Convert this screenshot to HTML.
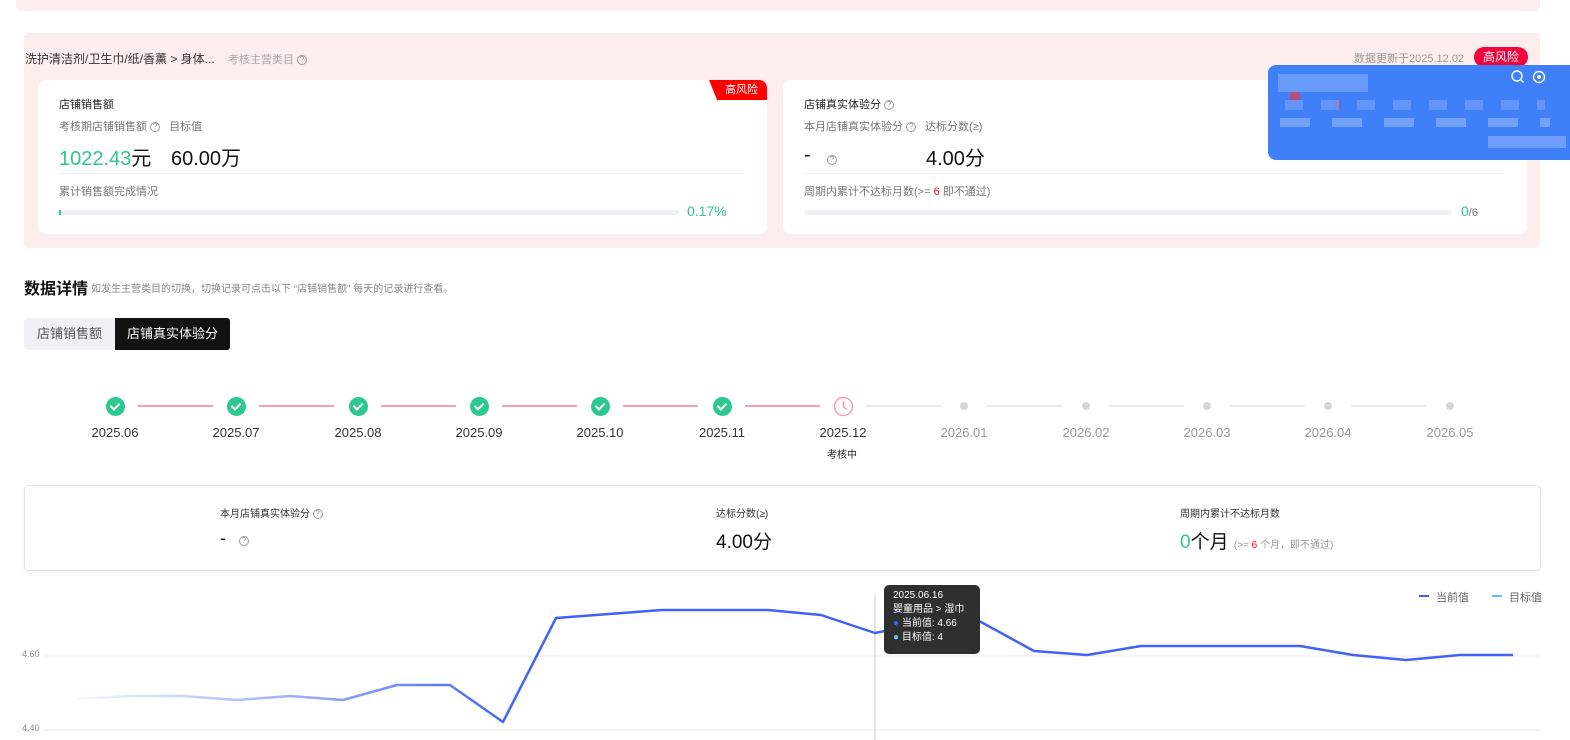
<!DOCTYPE html>
<html><head><meta charset="utf-8"><style>
*{margin:0;padding:0;box-sizing:border-box}
body{width:1570px;height:740px;overflow:hidden;background:#fff;font-family:"Liberation Sans","Noto Sans CJK SC",sans-serif;color:#222;position:relative}
.a{position:absolute;white-space:nowrap}
.q{display:inline-block;width:10px;height:10px;border:1px solid #999;border-radius:50%;font-size:8px;line-height:8px;text-align:center;color:#999;vertical-align:1px}
.g{color:#888}
.card{position:absolute;background:#fff;border-radius:8px}
.bar{position:absolute;height:5px;background:#eff0f3;border-radius:3px}
.node{position:absolute;width:19px;height:19px;border-radius:50%;background:#2dc88d;top:397px}
.node:after{content:"";position:absolute;left:6px;top:4px;width:4px;height:7px;border:solid #fff;border-width:0 2px 2px 0;transform:rotate(45deg)}
.ln{position:absolute;top:405px;height:2px}
.dot{position:absolute;width:8px;height:8px;border-radius:50%;background:#d5d6da;top:402px}
.tl{position:absolute;top:425px;font-size:13px;color:#333;width:80px;text-align:center}
</style></head><body>
<div class="a" style="left:16px;top:0;width:1524px;height:11px;background:#fdeeed;border-radius:0 0 6px 6px"></div>
<div class="a" style="left:24px;top:33px;width:1516px;height:215px;background:#fdeeed;border-radius:4px"></div>
<div class="a" style="left:25px;top:50px;font-size:12px;color:#333">洗护清洁剂/卫生巾/纸/香薰 &gt; 身体... <span class="g" style="margin-left:10px;font-size:11px;color:#aaa">考核主营类目 <span class="q">?</span></span></div>
<div class="a" style="left:1354px;top:50px;font-size:11px;color:#999">数据更新于2025.12.02</div>
<div class="a" style="left:1474px;top:47px;width:54px;height:20px;background:#f5003a;border-radius:10px;color:#fff;font-size:12px;text-align:center;line-height:20px">高风险</div>

<div class="card" style="left:38px;top:80px;width:729px;height:154px">
 <div class="a" style="right:0;top:0;width:58px;height:20px;background:#ff0000;border-radius:0 8px 0 0;clip-path:polygon(0 0,100% 0,100% 100%,14% 100%);color:#fff;font-size:11px;line-height:20px;text-align:right;padding-right:9px">高风险</div>
 <div class="a" style="left:21px;top:16px;font-size:11px;color:#222">店铺销售额</div>
 <div class="a" style="left:21px;top:38px;font-size:11px;color:#777">考核期店铺销售额 <span class="q">?</span><span style="margin-left:9px">目标值</span></div>
 <div class="a" style="left:21px;top:62px;font-size:20px;color:#2dc88d">1022.43<span style="color:#111">元</span></div>
 <div class="a" style="left:133px;top:62px;font-size:20px;color:#111">60.00万</div>
 <div class="a" style="left:21px;top:93px;width:685px;height:1px;background:#f0f0f0"></div>
 <div class="a" style="left:21px;top:103px;font-size:11px;color:#777">累计销售额完成情况</div>
 <div class="bar" style="left:21px;top:130px;width:620px"></div>
 <div class="a" style="left:21px;top:130px;width:2px;height:5px;background:#2dc88d"></div>
 <div class="a" style="left:649px;top:123px;font-size:14px;color:#2dc88d">0.17%</div>
</div>

<div class="card" style="left:783px;top:80px;width:744px;height:154px">
 <div class="a" style="left:21px;top:16px;font-size:11px;color:#222">店铺真实体验分 <span class="q">?</span></div>
 <div class="a" style="left:21px;top:38px;font-size:11px;color:#777">本月店铺真实体验分 <span class="q">?</span><span style="margin-left:9px">达标分数(≥)</span></div>
 <div class="a" style="left:21px;top:64px;font-size:20px;color:#111">-</div>
 <div class="a" style="left:44px;top:70px"><span class="q">?</span></div>
 <div class="a" style="left:143px;top:62px;font-size:20px;color:#111">4.00分</div>
 <div class="a" style="left:21px;top:93px;width:700px;height:1px;background:#f0f0f0"></div>
 <div class="a" style="left:21px;top:103px;font-size:11px;color:#777">周期内累计不达标月数(&gt;= <span style="color:#f00">6</span> 即不通过)</div>
 <div class="bar" style="left:21px;top:130px;width:648px"></div>
 <div class="a" style="left:678px;top:123px;font-size:14px;color:#2dc88d">0<span style="font-size:11px;color:#777">/6</span></div>
</div>

<div class="a" style="left:1268px;top:65px;width:302px;height:95px;background:#3f7ff8;border-radius:8px 0 0 8px"></div>
<div class="a" style="left:1278px;top:74px;width:90px;height:18px;background:#7aa5fb;opacity:.7"></div>
<div class="a" style="left:1290px;top:92px;width:10px;height:10px;background:#b4507a"></div>
<div class="a" style="left:1334px;top:100px;width:8px;height:10px;background:#b4507a"></div>
<div class="a" style="left:1285px;top:100px;width:260px;height:10px;background:repeating-linear-gradient(90deg,#6c9bfa 0 18px,#3f7ff8 18px 36px);opacity:.8"></div>
<div class="a" style="left:1280px;top:118px;width:270px;height:9px;background:repeating-linear-gradient(90deg,#80aafb 0 30px,#3f7ff8 30px 52px);opacity:.8"></div>
<div class="a" style="left:1488px;top:136px;width:78px;height:12px;background:#7aa5fb;opacity:.8"></div>
<svg class="a" style="left:1510px;top:69px" width="40" height="16"><circle cx="7" cy="7" r="5" fill="none" stroke="#fff" stroke-width="1.4"/><path d="M10.5 10.5l3 3" stroke="#fff" stroke-width="1.4"/><circle cx="29" cy="8" r="5.5" fill="none" stroke="#fff" stroke-width="1.4"/><circle cx="29" cy="8" r="2" fill="#fff"/></svg>

<div class="a" style="left:24px;top:275px;font-size:16px;font-weight:bold;color:#111">数据详情</div>
<div class="a" style="left:91px;top:280px;font-size:10px;color:#888">如发生主营类目的切换，切换记录可点击以下 “店铺销售额” 每天的记录进行查看。</div>
<div class="a" style="left:24px;top:318px;width:91px;height:32px;background:#eff1f5;border-radius:3px 0 0 3px;font-size:13px;color:#555;line-height:32px;text-align:center">店铺销售额</div>
<div class="a" style="left:115px;top:318px;width:115px;height:32px;background:#121212;border-radius:0 3px 3px 0;font-size:13px;color:#fff;line-height:32px;text-align:center">店铺真实体验分</div>

<div class="ln" style="left:138px;width:75px;background:#f6a1ab"></div>
<div class="ln" style="left:259px;width:75px;background:#f6a1ab"></div>
<div class="ln" style="left:381px;width:75px;background:#f6a1ab"></div>
<div class="ln" style="left:502px;width:75px;background:#f6a1ab"></div>
<div class="ln" style="left:623px;width:75px;background:#f6a1ab"></div>
<div class="ln" style="left:745px;width:75px;background:#f6a1ab"></div>
<div class="ln" style="left:866px;width:75px;background:#e8e8e8"></div>
<div class="ln" style="left:987px;width:75px;background:#e8e8e8"></div>
<div class="ln" style="left:1109px;width:75px;background:#e8e8e8"></div>
<div class="ln" style="left:1230px;width:75px;background:#e8e8e8"></div>
<div class="ln" style="left:1351px;width:75px;background:#e8e8e8"></div>
<div class="node" style="left:106px"></div><div class="node" style="left:227px"></div><div class="node" style="left:349px"></div>
<div class="node" style="left:470px"></div><div class="node" style="left:591px"></div><div class="node" style="left:713px"></div>
<svg class="a" style="left:833px;top:396px" width="21" height="21" viewBox="0 0 21 21"><circle cx="10.5" cy="10.5" r="9" fill="none" stroke="#f6a1ab" stroke-width="1.5"/><path d="M10.5 5v6l3.5 2.5" fill="none" stroke="#f6a1ab" stroke-width="1.5"/></svg>
<div class="dot" style="left:960px"></div><div class="dot" style="left:1082px"></div><div class="dot" style="left:1203px"></div><div class="dot" style="left:1324px"></div><div class="dot" style="left:1446px"></div>
<div class="tl" style="left:75px">2025.06</div><div class="tl" style="left:196px">2025.07</div><div class="tl" style="left:318px">2025.08</div>
<div class="tl" style="left:439px">2025.09</div><div class="tl" style="left:560px">2025.10</div><div class="tl" style="left:682px">2025.11</div>
<div class="tl" style="left:803px">2025.12</div>
<div class="tl" style="left:924px;color:#999">2026.01</div><div class="tl" style="left:1046px;color:#999">2026.02</div><div class="tl" style="left:1167px;color:#999">2026.03</div><div class="tl" style="left:1288px;color:#999">2026.04</div><div class="tl" style="left:1410px;color:#999">2026.05</div>
<div class="a" style="left:827px;top:446px;font-size:10px;color:#222">考核中</div>

<div class="a" style="left:24px;top:485px;width:1517px;height:86px;border:1px solid #e3e3e6;border-radius:5px;box-shadow:0 3px 6px rgba(0,0,0,.04)"></div>
<div class="a" style="left:220px;top:505px;font-size:10px;color:#333">本月店铺真实体验分 <span class="q">?</span></div>
<div class="a" style="left:220px;top:528px;font-size:18px;color:#111">- <span class="q" style="margin-left:8px">?</span></div>
<div class="a" style="left:716px;top:505px;font-size:10px;color:#333">达标分数(≥)</div>
<div class="a" style="left:716px;top:527px;font-size:19px;color:#111">4.00分</div>
<div class="a" style="left:1180px;top:505px;font-size:10px;color:#333">周期内累计不达标月数</div>
<div class="a" style="left:1180px;top:527px;font-size:19px;color:#111"><span style="color:#2dc88d">0</span>个月 <span style="font-size:10px;color:#999">(&gt;= <span style="color:#f00">6</span> 个月，即不通过)</span></div>

<div class="a" style="left:1419px;top:595px;width:10px;height:2px;background:#4060f5"></div>
<div class="a" style="left:1436px;top:589px;font-size:11px;color:#666">当前值</div>
<div class="a" style="left:1492px;top:595px;width:10px;height:2px;background:#5ec3f0"></div>
<div class="a" style="left:1509px;top:589px;font-size:11px;color:#666">目标值</div>
<div class="a" style="left:22px;top:649px;font-size:9px;color:#888">4.60</div>
<div class="a" style="left:22px;top:723px;font-size:9px;color:#888">4.40</div>
<svg class="a" style="left:0;top:0" width="1570" height="740">
<defs><linearGradient id="lg" x1="77" x2="520" gradientUnits="userSpaceOnUse"><stop offset="0" stop-color="#4262f7" stop-opacity="0.05"/><stop offset="1" stop-color="#4262f7"/></linearGradient></defs>
<line x1="44" y1="656" x2="1540" y2="656" stroke="#e8e8ea"/>
<line x1="44" y1="730" x2="1540" y2="730" stroke="#e8e8ea"/>
<line x1="875" y1="595" x2="875" y2="740" stroke="#ccc"/>
<polyline fill="none" stroke="url(#lg)" stroke-width="2.5" stroke-linejoin="round" points="77,699 130,696 183,696 237,700 290,696 343,700 397,685 450,685 503,722 556,618 609,614 662,610 715,610 768,610 821,615 875,633 928,622 981,622 1034,651 1087,655 1141,646 1194,646 1247,646 1300,646 1353,655 1406,660 1460,655 1513,655"/>
</svg>
<div class="a" style="left:884px;top:585px;width:96px;height:69px;background:#2f2f2f;border-radius:5px;color:#fff;font-size:10px;line-height:14px;padding:4px 9px">2025.06.16<br>婴童用品 &gt; 湿巾<br><span style="color:#4262f7">●</span> 当前值: 4.66<br><span style="color:#5ec3f0">●</span> 目标值: 4</div>
</body></html>
